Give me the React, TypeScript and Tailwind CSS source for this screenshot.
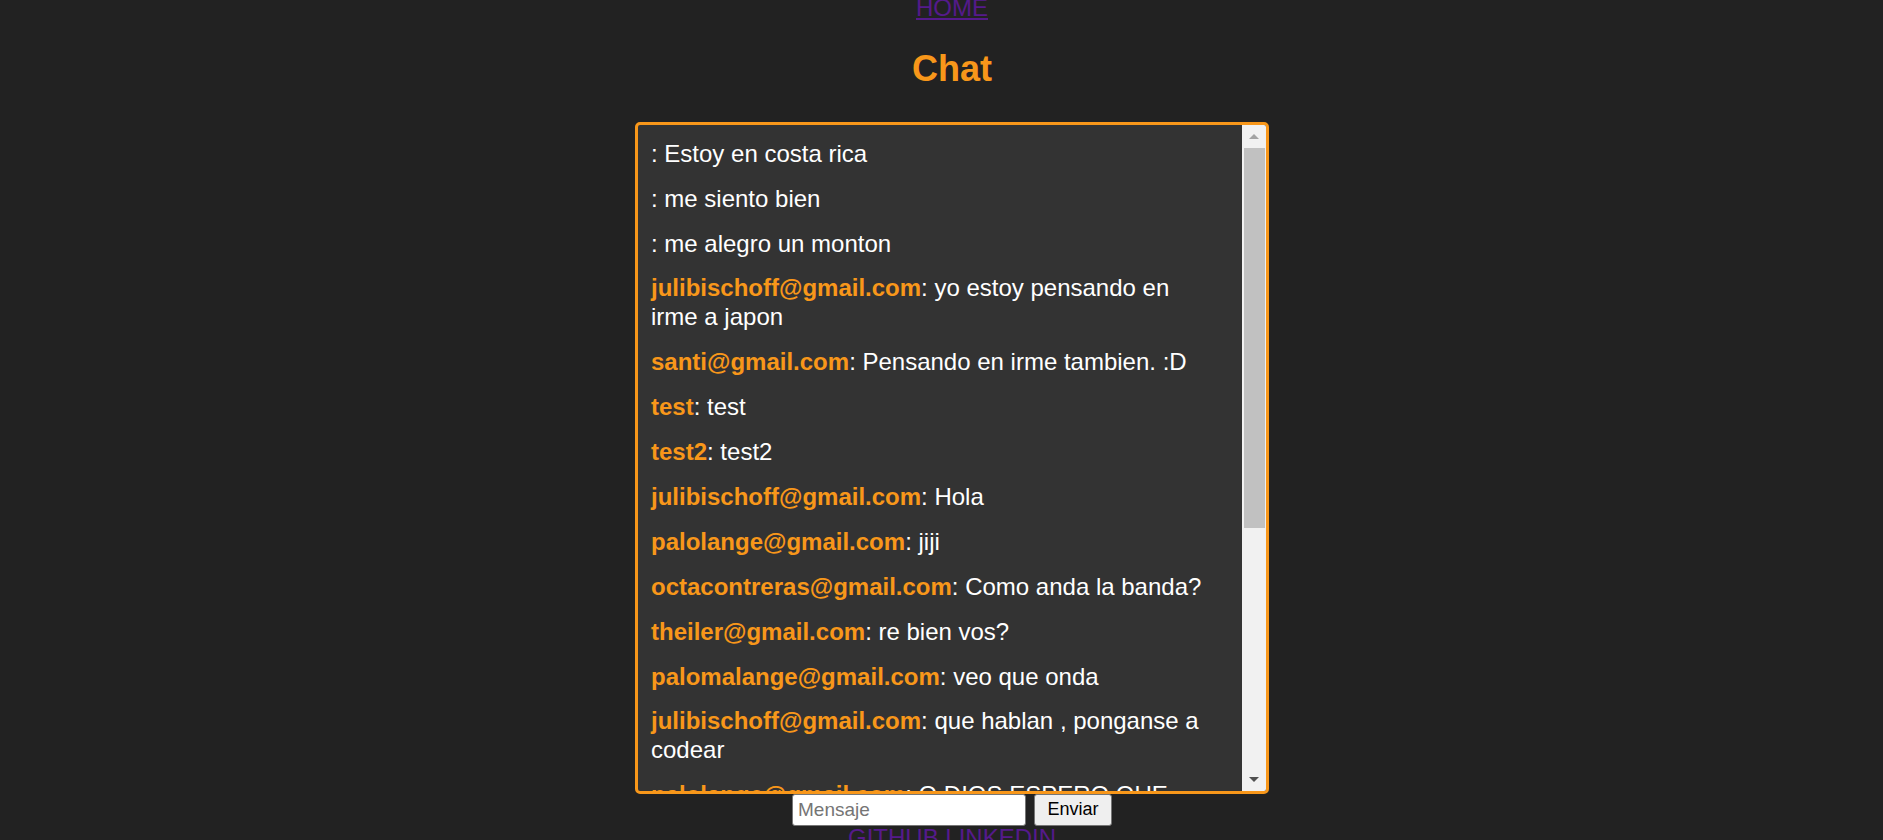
import React from 'react'

interface Msg {
  user: string
  text: string
}

const MESSAGES: Msg[] = [
  { user: '', text: 'Estoy en costa rica' },
  { user: '', text: 'me siento bien' },
  { user: '', text: 'me alegro un monton' },
  { user: 'julibischoff@gmail.com', text: 'yo estoy pensando en irme a japon' },
  { user: 'santi@gmail.com', text: 'Pensando en irme tambien. :D' },
  { user: 'test', text: 'test' },
  { user: 'test2', text: 'test2' },
  { user: 'julibischoff@gmail.com', text: 'Hola' },
  { user: 'palolange@gmail.com', text: 'jiji' },
  { user: 'octacontreras@gmail.com', text: 'Como anda la banda?' },
  { user: 'theiler@gmail.com', text: 're bien vos?' },
  { user: 'palomalange@gmail.com', text: 'veo que onda' },
  { user: 'julibischoff@gmail.com', text: 'que hablan , ponganse a codear' },
  { user: 'palolange@gmail.com', text: 'O DIOS ESPERO QUE ANDE' },
]

export default function App() {
  return (
    <div className="min-h-screen bg-[#222222] overflow-hidden font-['Liberation_Sans',Arial,sans-serif]">
      <div className="flex flex-col items-center pl-[21px]">
        <a href="#" className="-mt-[6px] text-[24px] leading-[28.8px] text-[#551a8b] underline">HOME</a>

        <h1 className="mt-[25px] text-[36px] leading-[41px] font-bold text-[#f8971a]">Chat</h1>

        <div className="mt-[33px] w-[634px] h-[672px] border-[3px] border-[#f8971a] rounded-[5px] bg-[#333333] flex overflow-hidden">
          <div className="flex-1 min-w-0 overflow-hidden pt-[14px] pl-[13px] pr-[20px]">
            <div className="flex flex-col gap-[15.9px]">
              {MESSAGES.map((m, i) => (
                <p key={i} className="text-[24px] leading-[29px] text-white">
                  {m.user && <span className="font-bold text-[#f8971a]">{m.user}</span>}
                  {': ' + m.text}
                </p>
              ))}
            </div>
          </div>

          {/* fake scrollbar */}
          <div className="w-[24px] shrink-0 bg-[#f1f1f1] flex flex-col">
            <div className="h-[23px] flex items-center justify-center">
              <div className="w-0 h-0 border-l-[5px] border-r-[5px] border-b-[5px] border-l-transparent border-r-transparent border-b-[#a3a3a3]" />
            </div>
            <div className="h-[380px] ml-[2px] mr-[1px] bg-[#c1c1c1]" />
            <div className="flex-1" />
            <div className="h-[22px] flex items-center justify-center">
              <div className="w-0 h-0 border-l-[5px] border-r-[5px] border-t-[5px] border-l-transparent border-r-transparent border-t-[#505050]" />
            </div>
          </div>
        </div>

        <div className="flex items-center gap-[8px]">
          <input
            placeholder="Mensaje"
            className="w-[234px] h-[32px] bg-white border border-[#767676] rounded-[3px] px-[5px] text-[19px] text-black placeholder:text-[#757575] outline-none"
          />
          <button className="w-[78px] h-[32px] bg-[#efefef] border border-[#767676] rounded-[3px] text-[18px] text-black">Enviar</button>
        </div>

        <div className="-mt-[2px] text-[24px] leading-[28.8px] text-[#551a8b]">
          <a href="#" className="underline">GITHUB</a>{' '}
          <a href="#" className="underline">LINKEDIN</a>
        </div>
      </div>
    </div>
  )
}
